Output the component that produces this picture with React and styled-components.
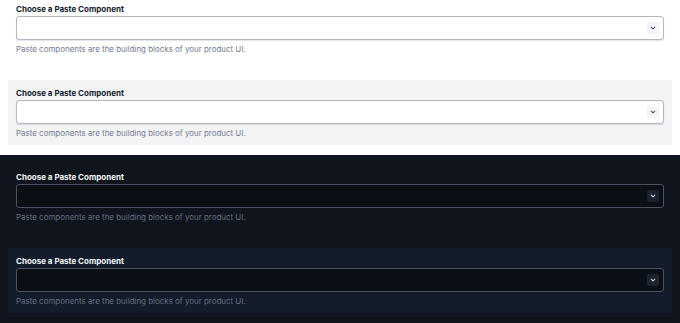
import React from 'react';
import styled, { createGlobalStyle } from 'styled-components';

const GlobalStyle = createGlobalStyle`
    html, body {
        margin: 0;
        padding: 0;
        background: #ffffff;
    }
    body {
        font-family: Inter, "Noto Sans", sans-serif;
        -webkit-font-smoothing: antialiased;
    }
`;

const themes = {
    light: {
        body: '#ffffff',
        weak: '#f4f4f6',
        text: '#121c2d',
        helper: '#737b90',
        inputBg: '#ffffff',
        border: '#b3b8c4',
        shadow: '0 1px 1px rgba(18, 28, 45, 0.12)',
        chevronBg: '#f4f4f6',
        chevron: '#4b5671',
    },
    dark: {
        body: '#0f141d',
        weak: '#121c2b',
        text: '#f4f5f7',
        helper: '#646d7e',
        inputBg: '#0b0f16',
        border: '#4b5364',
        shadow: 'none',
        chevronBg: '#1b2331',
        chevron: '#c9ceda',
    },
};

const Section = styled.section`
    display: flex;
    flex-direction: column;
    gap: 19px;
    padding: ${props => props.$top}px 8px 10px;
    background: ${props => props.$theme.body};
`;

const Card = styled.div`
    display: flex;
    flex-direction: column;
    padding: ${props => props.$top}px 8px 7px;
    background: ${props => props.$weak ? props.$theme.weak : 'transparent'};
`;

const Label = styled.label`
    display: block;
    margin-bottom: 2px;
    font-size: 8px;
    line-height: 10px;
    font-weight: 700;
    color: ${props => props.$theme.text};
`;

const SelectBox = styled.div`
    box-sizing: border-box;
    height: 24px;
    display: flex;
    align-items: center;
    justify-content: flex-end;
    padding-right: 4px;
    border: 1px solid ${props => props.$theme.border};
    border-radius: 3px;
    background: ${props => props.$theme.inputBg};
    box-shadow: ${props => props.$theme.shadow};
`;

const Chevron = styled.span`
    width: 12px;
    height: 12px;
    display: flex;
    align-items: center;
    justify-content: center;
    border-radius: 2px;
    background: ${props => props.$theme.chevronBg};
    color: ${props => props.$theme.chevron};
`;

const Helper = styled.p`
    margin: 4px 0 0;
    font-size: 7.95px;
    line-height: 10px;
    color: ${props => props.$theme.helper};
`;

const ChevronIcon = () => (
    <svg width="6" height="6" viewBox="0 0 6 6" fill="none">
        <path d="M1.2 2.2 L3 3.9 L4.8 2.2" stroke="currentColor" strokeWidth="1.1" strokeLinecap="round" strokeLinejoin="round" />
    </svg>
);

const ComponentSelect = ({ theme, weak, top }) => (
    <Card $theme={theme} $weak={weak} $top={top}>
        <Label $theme={theme}>Choose a Paste Component</Label>
        <SelectBox $theme={theme}>
            <Chevron $theme={theme}>
                <ChevronIcon />
            </Chevron>
        </SelectBox>
        <Helper $theme={theme}>Paste components are the building blocks of your product UI.</Helper>
    </Card>
);

const ThemeBlock = ({ theme, top }) => (
    <Section $theme={theme} $top={top}>
        <ComponentSelect theme={theme} top={top === 0 ? 4 : 8} />
        <ComponentSelect theme={theme} weak top={8} />
    </Section>
);

export default function App() {
    return (
        <>
            <GlobalStyle />
            <ThemeBlock theme={themes.light} top={0} />
            <ThemeBlock theme={themes.dark} top={9} />
        </>
    );
}
